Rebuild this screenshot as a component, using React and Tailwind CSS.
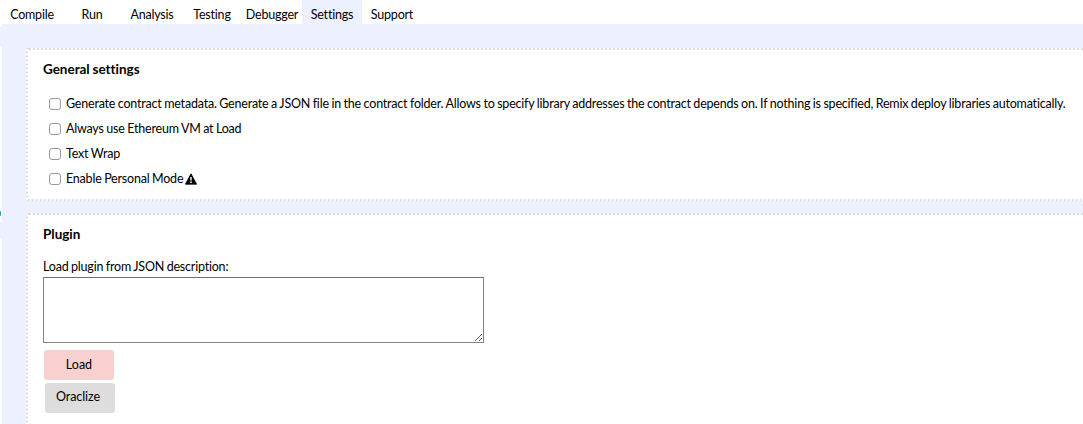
const TABS = [
  ['Compile', 'w-16'],
  ['Run', 'w-14'],
  ['Analysis', 'w-16'],
  ['Testing', 'w-[56px]'],
  ['Debugger', 'w-[64px]'],
  ['Settings', '-ml-[2px] w-[60px] bg-[#edf0fe]'],
  ['Support', 'w-[60px]'],
];

const OPTIONS = [
  'Generate contract metadata. Generate a JSON file in the contract folder. Allows to specify library addresses the contract depends on. If nothing is specified, Remix deploy libraries automatically.',
  'Always use Ethereum VM at Load',
  'Text Wrap',
  'Enable Personal Mode',
];

function WarningIcon() {
  return (
    <svg className="ml-[2px] h-3 w-3 shrink-0" viewBox="0 0 12 12">
      <path d="M6 .8 11.6 11.2H.4Z" fill="#000" stroke="#000" strokeWidth=".8" strokeLinejoin="round" />
      <path d="M5.2 4h1.6l-.25 3.8h-1.1ZM5.2 8.6h1.6v1.5H5.2Z" fill="#fff" />
    </svg>
  );
}

function Splitter() {
  return (
    <div className="flex w-[2px] shrink-0 flex-col">
      <div className="h-[3px] bg-white" />
      <div className="h-[19px]" />
      <div className="h-[165px] bg-white" />
      <div className="h-[5px] bg-white">
        <div className="h-full w-px rounded-r-full bg-[#2ea3c8]" />
      </div>
      <div className="h-[6px] bg-white" />
      <div className="h-4" />
      <div className="flex-1 bg-white" />
    </div>
  );
}

export default function App() {
  return (
    <div className="flex h-[424px] w-[1083px] flex-col overflow-hidden bg-white font-['Lato',sans-serif] text-[12.5px] leading-[15px] tracking-[-0.205px] text-black [font-variant-ligatures:none] [word-spacing:-0.4px]">
      <nav className="flex h-6 shrink-0">
        {TABS.map(([name, style]) => (
          <div key={name} className={`flex shrink-0 items-center justify-center pt-[4px] ${style}`}>
            {name}
          </div>
        ))}
      </nav>
      <div className="flex min-h-0 flex-1 bg-[#edf0fe]">
        <Splitter />
        <main className="flex min-w-0 flex-1 flex-col pl-6 pt-6">
          <section className="h-[153px] w-[1100px] shrink-0 rounded-[3px] border-2 border-dotted border-[#dddddd] bg-white pl-[15px] pt-[11px]">
            <h2 className="text-[13.5px] font-bold leading-4 tracking-[-0.03px]">General settings</h2>
            <div className="mt-[14px] flex flex-col pl-[6px]">
              {OPTIONS.map((option, i) => (
                <label key={option} className="flex h-[25px] items-center whitespace-nowrap">
                  <input type="checkbox" className="mr-[5px] h-3 w-3 shrink-0 appearance-none rounded-[3px] border border-[#999999] bg-white" />
                  {option}
                  {i === 3 && <WarningIcon />}
                </label>
              ))}
            </div>
          </section>
          <section className="mt-3 h-[213px] w-[1100px] shrink-0 rounded-[3px] border-2 border-dotted border-[#dddddd] bg-white pl-[15px] pt-[11px]">
            <h2 className="text-[13.5px] font-bold leading-4 tracking-[-0.03px]">Plugin</h2>
            <div className="mt-[17px]">Load plugin from JSON description:</div>
            <textarea className="mt-[3px] block h-[66px] w-[441px] resize rounded-none border border-[#858585] border-t-[#707070] bg-white" />
            <button className="ml-px mt-[7px] block h-[30px] w-[70px] rounded-[3px] bg-[#f9d0d0] pb-[2px] tracking-normal">Load</button>
            <button className="ml-[2px] mt-[3px] block h-[30px] w-[70px] rounded-[3px] bg-[#dddddd] pb-[3px] pr-[4px] tracking-[-0.1px]">Oraclize</button>
          </section>
        </main>
      </div>
    </div>
  );
}
